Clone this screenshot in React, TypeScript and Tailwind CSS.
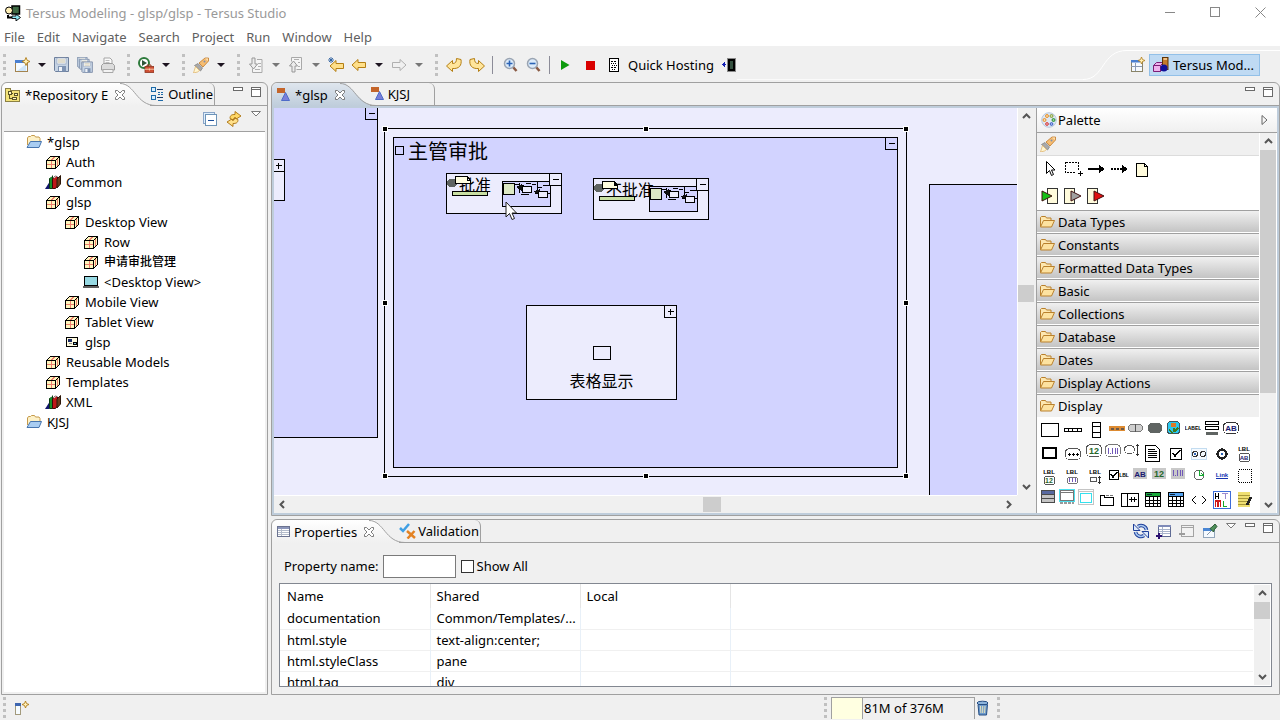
import React from "react";
import type { ReactNode } from "react";

/* ---------- drawing helpers ---------- */

type IconProps = { w?: number; h?: number; smooth?: boolean; children?: ReactNode; className?: string };

function Icon({ w = 16, h = 16, smooth = false, children, className = "" }: IconProps) {
  return (
    <svg
      width={w}
      height={h}
      viewBox={`0 0 ${w} ${h}`}
      fill="none"
      shapeRendering={smooth ? "auto" : "crispEdges"}
      className={`block shrink-0 ${className}`}
      aria-hidden="true"
    >
      {children}
    </svg>
  );
}

type BoxProps = { x: number; y: number; w: number; h: number; f?: string; s?: string; t?: number; r?: number };

function Box({ x, y, w, h, f = "none", s, t = 1, r = 0 }: BoxProps) {
  return s ? (
    <rect x={x + t / 2} y={y + t / 2} width={w - t} height={h - t} fill={f} stroke={s} strokeWidth={t} rx={r} />
  ) : (
    <rect x={x} y={y} width={w} height={h} fill={f} rx={r} />
  );
}

function Tiny({ x, y, size = 7, fill = "#000", children }: { x: number; y: number; size?: number; fill?: string; children: string }) {
  return (
    <text x={x} y={y} fontSize={size} fontWeight="700" fill={fill} textAnchor="middle" fontFamily="Liberation Sans, sans-serif">
      {children}
    </text>
  );
}

/* ---------- toolbar icons ---------- */

const AppIcon = () => (
  <Icon smooth>
    <rect x="7" y="1" width="7.500" height="8" fill="#3f6a45" stroke="#000" strokeWidth="1.500" />
    <circle cx="4" cy="5.500" r="3.500" fill="#fff0b8" stroke="#000" />
    <path d="M3 10v2.500h4" stroke="#000" strokeWidth="2" />
    <path d="M7 11h4V9l4.500 3.500L11 16v-2.500H7z" fill="#8ee6f2" stroke="#000" strokeWidth="0.900" />
  </Icon>
);

const NewIcon = () => (
  <Icon smooth>
    <rect x="1.500" y="3.500" width="12" height="11" fill="#f4faff" stroke="#a3834f" />
    <rect x="1" y="3" width="9" height="3" fill="#4a7fd0" />
    <path d="M3 14l9-7v7z" fill="#cfe6fa" />
    <path d="M12 0.500l1.200 2.800 2.800 1.200-2.800 1.200L12 8.500l-1.200-2.800L8 4.500l2.800-1.200z" fill="#fff1b8" stroke="#b07d1a" strokeWidth="0.900" />
  </Icon>
);

const FastViewIcon = () => (
  <Icon smooth>
    <rect x="1.500" y="3.500" width="5" height="11" fill="#f6fcff" stroke="#a39a7c" />
    <rect x="1" y="3" width="6" height="3" fill="#3e66b0" />
    <path d="M11.500 1l1 2.500 2.500 1-2.500 1-1 2.500-1-2.500-2.500-1 2.500-1z" fill="#fff0b8" stroke="#b07d1a" strokeWidth="0.900" />
  </Icon>
);

const Floppy = ({ x = 0, y = 0, s = 1 }: { x?: number; y?: number; s?: number }) => (
  <g transform={`translate(${x} ${y}) scale(${s})`}>
    <path d="M0.500 0.500h14v14h-13l-1-1z" fill="#c5d3e4" stroke="#6d7f9c" />
    <rect x="3" y="1" width="9" height="6" fill="#f6f9fc" stroke="#8c9bb3" strokeWidth="0.600" />
    <path d="M4 3h7M4 5h7" stroke="#b8a97b" strokeWidth="0.700" />
    <rect x="4" y="9" width="8" height="5.500" fill="#7e93b3" />
    <rect x="5" y="10" width="3" height="4" fill="#eef2f8" />
  </g>
);

const SaveIcon = () => (
  <Icon smooth>
    <Floppy />
  </Icon>
);

const SaveAllIcon = () => (
  <Icon smooth>
    <Floppy s={0.7} />
    <Floppy x={2} y={2} s={0.7} />
    <Floppy x={4.5} y={4.5} s={0.75} />
  </Icon>
);

const PrintIcon = () => (
  <Icon smooth>
    <path d="M4 7V1h6l2 2v4" fill="#fafafa" stroke="#a5a5a5" />
    <path d="M1.500 13V8.500l2-2h9l2 2V13z" fill="#dcdcdc" stroke="#9d9d9d" />
    <path d="M3 12.500h10v3H3z" fill="#f3f3f3" stroke="#a8a8a8" />
    <path d="M5.500 3.500h4M5.500 5.500h4" stroke="#bcbcbc" />
  </Icon>
);

const RunIcon = () => (
  <Icon smooth>
    <circle cx="6" cy="6" r="5" fill="#fff" stroke="#2d7a3b" strokeWidth="2" />
    <path d="M4 3l5 3-5 3z" fill="#2e5537" />
    <path d="M9 9.500V8h4v1.500" stroke="#9c3d22" />
    <rect x="7" y="9.500" width="9" height="6" fill="#cf4f33" stroke="#8d3420" strokeWidth="0.800" />
    <path d="M7 12.200h9M11.500 11.500v2" stroke="#f4c9a8" />
  </Icon>
);

const RocketIcon = () => (
  <Icon smooth>
    <path d="M6 6l6-5h3.500v3L10 10z" fill="#f6bd72" stroke="#c07a2b" strokeWidth="0.800" />
    <path d="M12 1.500h3v2.500z" fill="#fbe1b4" />
    <circle cx="11.500" cy="4.500" r="1" fill="#7e8fae" />
    <path d="M5 6.500l4.500 4.500-2 3-6-5.500z" fill="#a9a9a9" stroke="#858585" strokeWidth="0.800" />
    <path d="M2.500 9.500l4 4-2 1.500-4 1z" fill="#fff6d2" stroke="#dcae60" strokeWidth="0.700" />
  </Icon>
);

const AnnotationDown = () => (
  <Icon smooth>
    <path d="M6.500 3.500V1.500h-2v2h2M9 2.500h5v13H4.500v-4" fill="#f5f5f5" stroke="#a9a9a9" />
    <path d="M4 1h3v6h2.500L5.500 12 1.500 7H4z" fill="#ececec" stroke="#979797" />
    <path d="M7 12.500h5M10 9.500h3M10 6.500h3" stroke="#b0b0b0" />
  </Icon>
);

const AnnotationUp = () => (
  <Icon smooth>
    <path d="M3.500 4.500v-4h10v12h-5" fill="#f5f5f5" stroke="#a9a9a9" />
    <path d="M4 15V9H1.500l4-5 4 5H7v6z" fill="#ececec" stroke="#979797" />
    <path d="M6 2.500h5M10 5.500h2M10 9.500h2" stroke="#b0b0b0" />
  </Icon>
);

const ArrowLeft = ({ gray = false }: { gray?: boolean }) => (
  <path
    d="M1 8l6-5.500v3h7.500v5H7v3z"
    fill={gray ? "#f0f0f0" : "#ffe08a"}
    stroke={gray ? "#b0b0b0" : "#b47f14"}
    strokeLinejoin="round"
  />
);

const LastEditIcon = () => (
  <Icon smooth>
    <g transform="translate(1 1)">
      <ArrowLeft />
    </g>
    <path d="M3 0v6M0 3h6M1 1l4 4M5 1L1 5" stroke="#2b5f9e" strokeWidth="0.900" />
  </Icon>
);

const BackIcon = () => (
  <Icon smooth>
    <ArrowLeft />
  </Icon>
);

const ForwardIcon = () => (
  <Icon smooth>
    <g transform="translate(16 0) scale(-1 1)">
      <ArrowLeft gray />
    </g>
  </Icon>
);

const UndoArrow = () => (
  <path
    d="M0.500 9l6-5.500v3c3 0 4-1.500 4-5l4.500 1c1 6-2 9.500-8.500 9v3z"
    fill="#ffe59b"
    stroke="#b47f14"
    strokeLinejoin="round"
  />
);

const UndoIcon = () => (
  <Icon smooth>
    <UndoArrow />
  </Icon>
);

const RedoIcon = () => (
  <Icon smooth>
    <g transform="translate(16 0) scale(-1 1)">
      <UndoArrow />
    </g>
  </Icon>
);

const ZoomIcon = ({ plus = false }: { plus?: boolean }) => (
  <Icon smooth>
    <path d="M10 10l3.500 4" stroke="#8a5a44" strokeWidth="2.500" />
    <circle cx="6.500" cy="6.500" r="5" fill="#dcebfa" stroke="#9aa4b2" strokeWidth="1.500" />
    <path d={plus ? "M3.500 6.500h6M6.500 3.500v6" : "M3.500 6.500h6"} stroke="#2b63b5" strokeWidth="1.600" />
  </Icon>
);

const PlayIcon = () => (
  <Icon smooth>
    <path d="M1 3l8.500 5L1 13z" fill="#0c9a0c" />
  </Icon>
);

const StopIcon = () => (
  <Icon>
    <Box x={3} y={4} w={9} h={9} f="#d90000" />
  </Icon>
);

const ServerIcon = () => (
  <Icon>
    <Box x={3} y={1} w={10} h={14} f="#fff" s="#000" />
    <path d="M5 4.500h6M5 10.500h6" stroke="#000" strokeDasharray="2 1" />
    <path d="M5 6.500h6M6 8.500h5M6 12.500h4" stroke="#000" strokeDasharray="1 1" />
  </Icon>
);

const DeviceIcon = () => (
  <Icon>
    <path d="M2 7.500h3" stroke="#1420b4" />
    <path d="M1 7.500l3-3v6z" fill="#1420b4" />
    <Box x={6} y={1} w={9} h={14} f="#8a8a8a" />
    <Box x={7} y={2} w={7} h={12} f="#34503f" s="#000" t={2} />
  </Icon>
);

const OpenPerspectiveIcon = () => (
  <Icon smooth>
    <rect x="1.500" y="3.500" width="11" height="11" fill="#f6fafe" stroke="#8a8468" />
    <rect x="1" y="3" width="9" height="2.500" fill="#4a7fd0" />
    <path d="M5.500 6v8M1 9.500h11" stroke="#8a9ab5" />
    <path d="M11.500 0l1 2.500 2.500 1-2.500 1-1 2.500-1-2.500-2.500-1 2.500-1z" fill="#fff0b8" stroke="#b07d1a" strokeWidth="0.800" />
  </Icon>
);

const TersusIcon = () => (
  <Icon smooth>
    <path d="M0.500 8.500l3-3h7v6l-3 3h-7z" fill="#eeb2ec" stroke="#7b1f76" />
    <path d="M0.500 8.500h7v6M7.500 8.500l3-3" stroke="#7b1f76" />
    <rect x="9.500" y="0.500" width="5.500" height="12" fill="#c47a2c" stroke="#5e3407" />
    <rect x="10.500" y="1" width="3.500" height="2" fill="#f0c187" />
    <circle cx="11" cy="11" r="3.500" fill="#10109a" />
  </Icon>
);

/* ---------- view icons ---------- */

const RepositoryIcon = () => (
  <Icon>
    <path d="M0.500 1.500h5v2h9v11h-14z" fill="#f3e37a" stroke="#8c8144" />
    <path d="M4.500 5v7M4.500 6.500h3M4.500 11.500h3" stroke="#5a5326" />
    <Box x={3} y={4} w={4} h={4} f="#fff8c4" s="#5a5326" />
    <Box x={9} y={6} w={4} h={3} f="#fff8c4" s="#5a5326" />
    <Box x={7} y={10} w={5} h={3} f="#fff8c4" s="#5a5326" />
  </Icon>
);

const OutlineIcon = () => (
  <Icon>
    <Box x={1} y={1} w={5} h={5} f="#d7efff" s="#1d6aa8" />
    <Box x={1} y={9} w={5} h={5} f="#d7efff" s="#1d6aa8" />
    <path d="M7 3.500h6M7 11.500h6" stroke="#1b3b66" />
    <path d="M8 6.500h2M11 6.500h2M8 8.500h2M11 8.500h2M8 14.500h5" stroke="#1d6aa8" />
  </Icon>
);

const ModelTabIcon = () => (
  <Icon smooth>
    <rect x="1" y="1" width="8" height="5" fill="#c4652a" />
    <path d="M9.500 5.500l4 8H5.500z" fill="#7a7fd8" stroke="#4e6bc8" />
  </Icon>
);

const CloseGlyph = () => (
  <Icon w={12} h={12} smooth>
    <path
      d="M1.500 1.500h2L6 4l2.500-2.500h2v2L8 6l2.500 2.500v2h-2L6 8l-2.500 2.500h-2v-2L4 6 1.500 3.500z"
      fill="#fff"
      stroke="#6e6e6e"
      strokeWidth="0.900"
    />
  </Icon>
);

const MinGlyph = () => (
  <Icon w={10} h={4}>
    <Box x={0} y={0} w={10} h={4} f="#fff" s="#6a6a6a" />
  </Icon>
);

const MaxGlyph = () => (
  <Icon w={10} h={10}>
    <Box x={0} y={0} w={10} h={10} f="#fff" s="#6a6a6a" />
    <Box x={0} y={2} w={10} h={1} f="#6a6a6a" />
  </Icon>
);

const MenuGlyph = () => (
  <Icon w={10} h={6} smooth>
    <path d="M0.500 0.500h9L5 5z" fill="#fff" stroke="#7b7b7b" />
  </Icon>
);

const CollapseAllIcon = () => (
  <Icon>
    <Box x={0} y={1} w={12} h={12} f="#dfeefb" s="#8aa5c8" />
    <Box x={2} y={3} w={12} h={12} f="#fff" s="#6e94b8" />
    <Box x={5} y={9} w={6} h={1} f="#1c4f9c" />
  </Icon>
);

const LinkIcon = () => (
  <Icon smooth>
    <path d="M4 7.500C4 4 6 3.500 9 3.500V0.500l6 4.500-4 2.500H9.500V6.500C8 6.500 7.500 7.500 7.500 9z" fill="#ffd867" stroke="#a9700f" strokeWidth="0.900" />
    <path d="M12 8.500c0 3.500-2 4-5 4v3l-6-4.500 4-2.500h1.500v1c1.500 0 2-1 2-2.500z" fill="#ffe08a" stroke="#a9700f" strokeWidth="0.900" />
  </Icon>
);

const TableViewIcon = () => (
  <Icon>
    <Box x={1} y={2} w={13} h={11} f="#fff" s="#6b7390" />
    <Box x={2} y={3} w={11} h={2} f="#8d97bb" />
    <path d="M2 6.500h11M2 8.500h11M2 10.500h11M5.500 5v7" stroke="#b4bccb" />
  </Icon>
);

const ValidationIcon = () => (
  <Icon w={17} smooth>
    <path d="M1 5l3 3 6-7" stroke="#3f9fe4" strokeWidth="2.500" />
    <path d="M8 8l8 7M15.500 8l-7 7.500" stroke="#e38222" strokeWidth="2.500" />
  </Icon>
);

const RefreshIcon = () => (
  <Icon smooth>
    <path d="M5 3.500A5.500 5.500 0 0 1 13.500 7M11 12.500A5.500 5.500 0 0 1 2.500 9" stroke="#1f3f9a" strokeWidth="3.600" />
    <path d="M5 3.500A5.500 5.500 0 0 1 13.500 7M11 12.500A5.500 5.500 0 0 1 2.500 9" stroke="#a8c8f0" strokeWidth="1.600" />
    <path d="M0.500 1v6.500H7z" fill="#dce9fb" stroke="#1f3f9a" />
    <path d="M15.500 15V8.500H9z" fill="#dce9fb" stroke="#1f3f9a" />
  </Icon>
);

const AddRowIcon = () => (
  <Icon>
    <Box x={2} y={2} w={13} h={12} f="#fff" s="#5f6b94" />
    <Box x={2} y={2} w={13} h={2} f="#7f8bb8" />
    <path d="M3 6.500h11M3 8.500h11M3 10.500h11M6.500 4v9" stroke="#a9b4cc" />
    <path d="M3 10v6M0 13h6" stroke="#2b1070" strokeWidth="2" />
  </Icon>
);

const RemoveRowIcon = () => (
  <Icon>
    <Box x={2} y={2} w={13} h={12} f="#f2f2f2" s="#a3a3a3" />
    <Box x={2} y={4} w={13} h={1} f="#a3a3a3" />
    <Box x={0} y={10} w={6} h={2} f="#9c9c9c" />
  </Icon>
);

const PinIcon = () => (
  <Icon smooth>
    <rect x="1.500" y="5.500" width="11" height="9" fill="#f5faff" stroke="#93a6bb" />
    <rect x="1" y="5" width="9" height="3" fill="#4a86d4" />
    <path d="M5 12l4-4" stroke="#8a96a5" />
    <path d="M8 5.500l3.500 3.500 1-2.500 2.500-3-2-2.500-3 3z" fill="#4f8f5a" stroke="#24522e" strokeWidth="0.900" />
  </Icon>
);

const TrashIcon = () => (
  <Icon smooth>
    <ellipse cx="7.500" cy="3" rx="5.500" ry="1.800" fill="#8db4dc" stroke="#264f85" />
    <path d="M3 4.500h9.500l-1 10.500H4z" fill="#6d9acb" stroke="#264f85" />
    <path d="M5.500 6l0.400 7M7.700 6v7M10 6l-0.400 7" stroke="#e9e4bd" />
  </Icon>
);

/* ---------- tree icons ---------- */

const FolderBlue = () => (
  <Icon smooth>
    <path d="M1.500 11V4l1-1.500h2l1-1h3l1 1.500h3.500l1 1.500V7" fill="#fdf1c8" stroke="#c59a4a" />
    <path d="M1 13.500L4.500 7.500h11l-2.500 6z" fill="#a9cdf2" stroke="#4775ae" />
  </Icon>
);

const PackageIcon = () => (
  <Icon>
    <path d="M1.500 6.500h9v8h-9z" fill="#fff6bd" stroke="#000" />
    <path d="M1.500 6.500l4-4h9l-4 4zM10.500 6.500l4-4v8l-4 4z" fill="#fff6bd" stroke="#000" />
    <path d="M6.500 7v7M6.500 6l3-3M2 10.500h8M12.500 5v7" stroke="#f08070" />
  </Icon>
);

const BooksIcon = () => (
  <Icon smooth>
    <path d="M0 15l4.500-7v7z" fill="#141470" />
    <path d="M4.500 14.500V4.500l3-3v13z" fill="#17902a" stroke="#083d10" />
    <path d="M7.500 14.500V5l3-3 2 1v9l-2 2.500z" fill="#c01818" stroke="#3c0808" />
    <path d="M12 14V5l3.500-3.500V10z" fill="#6c3a1a" stroke="#2c1608" />
    <path d="M5.500 3.500l2-2M9 4l3-2.500" stroke="#ddd" />
  </Icon>
);

const LaptopIcon = () => (
  <Icon>
    <Box x={1} y={2} w={14} h={10} f="#97d9e3" s="#000" />
    <Box x={0} y={12} w={16} h={2} f="#5f5f5f" />
  </Icon>
);

const SystemIcon = () => (
  <Icon>
    <Box x={2} y={3} w={12} h={10} f="#fffbe0" s="#000" />
    <Box x={4} y={5} w={4} h={3} f="#1a2a66" />
    <Box x={9} y={8} w={4} h={3} f="#8bc0df" s="#000" />
    <Box x={5} y={9} w={3} h={1} f="#888" />
  </Icon>
);

/* ---------- palette icons ---------- */

const FolderYellow = () => (
  <Icon smooth>
    <path d="M1.500 12.500V3.500l1-1h4l1 1.500h4.500v2.500" fill="#fde7b0" stroke="#b9802c" />
    <path d="M1.500 13L4.500 6.500h11l-3 6.500z" fill="#fde2a0" stroke="#b9802c" />
  </Icon>
);

const PaletteIcon = () => (
  <Icon smooth>
    <circle cx="8" cy="8" r="7.300" fill="#dfe9f5" stroke="#b7c8dd" />
    <circle cx="6" cy="4" r="1.500" fill="#fbd8a4" stroke="#e38a20" strokeWidth="0.900" />
    <circle cx="10.500" cy="4" r="1.500" fill="#cdd9a0" stroke="#7c962e" strokeWidth="0.900" />
    <circle cx="3.500" cy="8" r="1.500" fill="#fbd8a4" stroke="#e38a20" strokeWidth="0.900" />
    <circle cx="12.500" cy="8" r="1.500" fill="#8fd08f" stroke="#1f8a2a" strokeWidth="0.900" />
    <circle cx="6" cy="12" r="1.400" fill="#f4b0b0" stroke="#cf3333" strokeWidth="0.900" />
    <circle cx="10.500" cy="12" r="1.400" fill="#a8b8ec" stroke="#3256c0" strokeWidth="0.900" />
  </Icon>
);

const PointerTool = () => (
  <Icon w={20} h={20} smooth>
    <path d="M6.500 2.500v12l3-3 2 5 2-1-2-4.500h3.500z" fill="#fff" stroke="#000" />
  </Icon>
);

const MarqueeTool = () => (
  <Icon w={20} h={20}>
    <rect x="2.500" y="3.500" width="13" height="10" stroke="#000" strokeDasharray="2 1" />
    <Box x={13} y={11} w={7} h={7} f="#fff" />
    <path d="M15 14.500h5M17.500 12v5" stroke="#000" />
  </Icon>
);

const FlowTool = ({ dashed = false }: { dashed?: boolean }) => (
  <Icon w={20} h={20}>
    <path d="M2 10h12" stroke="#000" strokeWidth="2" strokeDasharray={dashed ? "2 1" : undefined} />
    <path d="M13 5.500l5.500 4.500-5.500 4.500z" fill="#000" />
  </Icon>
);

const NoteTool = () => (
  <Icon w={20} h={20}>
    <path d="M4.500 4.500h8l3 3v10h-11zM12.500 4.500v3h3" fill="#fffbdc" stroke="#000" />
  </Icon>
);

const SlotTool = ({ color, first = false }: { color: string; first?: boolean }) => (
  <Icon w={20} h={20} smooth>
    <rect x={first ? 7.5 : 1.5} y="2.500" width="10" height="15" fill="#fffbdc" stroke="#333" />
    <path d={first ? "M2 5l10 5-10 5z" : "M8 5l10 5-10 5z"} fill={color} stroke="#401010" />
  </Icon>
);

const DateBars = ({ x, y, h }: { x: number; y: number; h: number }) => (
  <path
    d={`M${x} ${y}v${h}M${x + 4} ${y}v${h}M${x + 7} ${y}v${h}M${x + 9} ${y}v${h}M${x + 2} ${y + h - 1}v1`}
    stroke="#7058b8"
  />
);

const TableArt = ({ bar }: { bar: string }) => (
  <>
    <Box x={2} y={3} w={16} h={15} f="#fff" s="#000" />
    <Box x={3} y={4} w={14} h={3} f={bar} />
    <path d="M4 5.500h5" stroke="#123" />
    <path d="M2 7.500h16M2 11.500h16M2 14.500h16M6.500 8v10M10.500 8v10M14.500 8v10" stroke="#000" />
  </>
);

const paletteRows: { wide: boolean; name: string; art: ReactNode }[][] = [
  [
    { wide: true, name: "Pane", art: <Box x={1} y={3} w={18} h={14} f="#fff" s="#000" /> },
    { wide: true, name: "Row", art: <><Box x={1} y={8} w={18} h={4} f="#fff" s="#000" /><path d="M5.500 8v4M9.500 8v4M14.500 8v4" stroke="#000" /></> },
    { wide: true, name: "Column", art: <><Box x={6} y={2} w={9} h={16} f="#fff" s="#000" /><path d="M6 6.500h9M6 12.500h9" stroke="#000" /></> },
    { wide: false, name: "Toolbar", art: <><Box x={0} y={6} w={16} h={5} f="#dd8b32" /><path d="M2 8.500h3M7 8.500h3M12 8.500h3" stroke="#6c5a4a" strokeWidth="2" /></> },
    { wide: false, name: "Toggle", art: <><Box x={0} y={4} w={15} h={8} f="#cfcfcf" s="#777" r={4} /><path d="M7.500 4v8" stroke="#555" /></> },
    { wide: false, name: "Button", art: <Box x={1} y={3} w={14} h={10} f="#5f6462" r={4} /> },
    { wide: false, name: "Image", art: <><Box x={1} y={1} w={13} h={13} f="#28c8f0" s="#40535a" r={3} /><circle cx="7.500" cy="5" r="2.500" fill="#dd7a28" /><path d="M8 8v4M3 10l4 3M12 8l-4 4" stroke="#3f7a20" strokeWidth="1.500" /></> },
    { wide: false, name: "Label", art: <Tiny x={8} y={10} size={5}>LABEL</Tiny> },
    { wide: false, name: "List", art: <><Box x={1} y={1} w={14} h={4} f="#fff" s="#000" /><Box x={1} y={6} w={14} h={4} f="#fff" s="#000" /><Box x={2} y={12} w={12} h={3} f="#5f6462" /></> },
    { wide: false, name: "Text input", art: <><Box x={0} y={2} w={16} h={12} f="#fff" s="#333" r={4} /><Tiny x={8} y={11} size={8} fill="#1a1a70">AB</Tiny></> },
  ],
  [
    { wide: true, name: "Popup", art: <Box x={2} y={4} w={15} h={12} f="#fff" s="#000" t={2} /> },
    { wide: true, name: "Password", art: <><Box x={2} y={5} w={16} h={12} f="#fff" s="#555" r={4} /><path d="M4.500 11h3M8.500 11h3M12.500 11h3M6 9.500v3M10 9.500v3M14 9.500v3" stroke="#000" /></> },
    { wide: false, name: "Number input", art: <><Box x={0} y={1} w={16} h={13} f="#fff" s="#555" r={4} /><Tiny x={8} y={11} size={9} fill="#27682b">12</Tiny></> },
    { wide: false, name: "Date input", art: <><Box x={0} y={1} w={16} h={13} f="#fff" s="#777" r={4} /><DateBars x={3.5} y={5} h={6} /></> },
    { wide: false, name: "Chooser", art: <><Box x={0} y={2} w={11} h={9} f="#fff" s="#555" r={4} /><path d="M13.500 1v12M12 2.500h3M12 11.500h3" stroke="#333" /></> },
    { wide: true, name: "Text area", art: <><path d="M2.500 2.500h10l4 4v12h-14z" fill="#fff" stroke="#000" /><path d="M5 6.500h7M5 8.500h9M5 10.500h9M5 12.500h9M5 14.500h9" stroke="#000" /></> },
    { wide: true, name: "Check box", art: <><Box x={4} y={5} w={12} h={12} f="#fff" s="#000" /><path d="M7 10l2 3 5-6" stroke="#000" strokeWidth="1.500" /></> },
    { wide: true, name: "Radio group", art: <><Box x={2} y={5} w={16} h={12} f="#f4faff" s="#c3dcf0" /><circle cx="6" cy="11" r="2.500" stroke="#333" /><circle cx="6" cy="11" r="1" fill="#2b63b5" /><circle cx="14" cy="11" r="2.500" stroke="#333" /></> },
    { wide: true, name: "Radio button", art: <><circle cx="10" cy="11" r="4.500" stroke="#222" strokeWidth="2.500" fill="#fff" /><circle cx="10" cy="11" r="1.500" fill="#2b63b5" /></> },
    { wide: true, name: "Labeled text", art: <><Tiny x={9} y={8} size={6}>LBL</Tiny><Box x={4} y={10} w={11} h={9} f="#fff" s="#555" r={2} /><Tiny x={9} y={17} size={6} fill="#1a1a70">AB</Tiny></> },
  ],
  [
    { wide: true, name: "Labeled number", art: <><Tiny x={9} y={8} size={6}>LBL</Tiny><Box x={4} y={10} w={11} h={9} f="#fff" s="#555" r={2} /><Tiny x={9} y={17} size={7} fill="#27682b">12</Tiny></> },
    { wide: true, name: "Labeled date", art: <><Tiny x={9} y={8} size={6}>LBL</Tiny><Box x={4} y={11} w={11} h={7} f="#fff" s="#777" r={2} /><path d="M6.500 12v4M9.500 12v4M12.500 12v4" stroke="#7058b8" /></> },
    { wide: true, name: "Labeled chooser", art: <><Tiny x={9} y={8} size={6}>LBL</Tiny><Box x={4} y={11} w={7} h={5} f="#fff" s="#555" r={1} /><path d="M13.500 10v8M12 11.500h3M12 16.500h3" stroke="#333" /></> },
    { wide: true, name: "Labeled check box", art: <><Box x={0} y={4} w={10} h={10} f="#fff" s="#000" /><path d="M2 8l2 3 4-5" stroke="#000" strokeWidth="1.500" /><Tiny x={15} y={11} size={5}>LBL</Tiny></> },
    { wide: false, name: "Text display", art: <><Box x={1} y={2} w={14} h={11} f="#c9c9c9" /><Tiny x={8} y={11} size={8} fill="#1a1a70">AB</Tiny></> },
    { wide: false, name: "Number display", art: <><Box x={1} y={2} w={14} h={11} f="#c9c9c9" /><Tiny x={8} y={11} size={9} fill="#27682b">12</Tiny></> },
    { wide: false, name: "Date display", art: <><Box x={1} y={2} w={14} h={11} f="#c9c9c9" /><DateBars x={3.5} y={4} h={6} /></> },
    { wide: true, name: "Timer", art: <><circle cx="10" cy="9" r="5" fill="#fff" stroke="#666" /><path d="M10 4v5.500h5M12 7l3 2.500" stroke="#16a832" /></> },
    { wide: true, name: "Link", art: <><Tiny x={10} y={11} size={6} fill="#1432b0">Link</Tiny><path d="M4 12.500h12" stroke="#1432b0" /></> },
    { wide: true, name: "Embedded", art: <rect x="3.500" y="3.500" width="13" height="13" stroke="#000" strokeDasharray="1 1" /> },
  ],
  [
    { wide: false, name: "Stack", art: <><Box x={1} y={1} w={14} h={13} f="#c4c4c4" s="#4a4a4a" r={1} /><Box x={2} y={2} w={12} h={3} f="#5869a0" /><path d="M1 5.500h14M1 9.500h14" stroke="#4a4a4a" /></> },
    { wide: false, name: "Window", art: <><Box x={0} y={0} w={16} h={13} f="#4fe0ee" /><Box x={1} y={1} w={14} h={11} f="#fff" s="#777" /><path d="M1 3.500h14" stroke="#777" /><path d="M1 14h14" stroke="#999" strokeWidth="2" strokeDasharray="3 1" /></> },
    { wide: false, name: "Dialog", art: <><Box x={0} y={0} w={16} h={16} f="#fff" s="#c4c4c4" /><path d="M0 2.500h16" stroke="#c4c4c4" /><Box x={2} y={4} w={12} h={10} f="#fff" s="#35e0ee" r={1} /></> },
    { wide: true, name: "Tabs", art: <><path d="M3.500 6.500h4v2h9v8h-13z" fill="#fff" stroke="#000" /><path d="M9 6.500h3M13 6.500h3" stroke="#777" /></> },
    { wide: true, name: "Splitter", art: <><Box x={1} y={4} w={18} h={14} f="#fff" s="#000" /><path d="M7.500 4v14M9 10.500h8M11.500 8v5M14.500 8v5" stroke="#000" /></> },
    { wide: true, name: "Table", art: <TableArt bar="#19a83a" /> },
    { wide: true, name: "Simple table", art: <TableArt bar="#52a2f0" /> },
    { wide: true, name: "Tag", art: <path d="M7 7l-4 4 4 4M13 7l4 4-4 4" stroke="#000" /> },
    { wide: true, name: "HTML", art: <><Box x={1} y={2} w={18} h={18} f="#fff" s="#3c6cd8" /><path d="M3.500 4v6M6.500 4v6M3.500 7.500h3" stroke="#000" /><path d="M10 4.500h6M13.500 4v6" stroke="#9a8ad0" /><path d="M3.500 18v-6h5v6M6 12v6" stroke="#d01818" strokeWidth="1.500" /><path d="M11.500 12v6M11 17.500h4" stroke="#18a828" /></> },
    { wide: true, name: "Notes", art: <><Box x={3} y={3} w={12} h={15} f="#efdf72" /><path d="M3 6.500h12M3 9.500h12M3 12.500h12M3 15.500h12" stroke="#a8983a" /><path d="M16 8l-4 8" stroke="#222" strokeWidth="2.500" /></> },
  ],
];

/* ---------- small UI parts ---------- */

function Handle() {
  return <div className="ml-1 h-[22px] w-1 shrink-0 border-l-[3px] border-dotted border-[#c0c0c0] first:ml-0" />;
}

function ToolButton({ label, children }: { label: string; children: ReactNode }) {
  return (
    <button type="button" aria-label={label} className="flex h-6 shrink-0 items-center justify-center">
      {children}
    </button>
  );
}

function DropArrow({ label, gray = false }: { label: string; gray?: boolean }) {
  return (
    <button type="button" aria-label={label} className="flex h-6 w-[10px] shrink-0 items-center justify-center">
      <Icon w={8} h={4} smooth>
        <path d="M0 0h8L4 4z" fill={gray ? "#777" : "#1d1420"} />
      </Icon>
    </button>
  );
}

function Separator() {
  return <div className="h-[18px] w-1 shrink-0 border-l border-[#8c8c98]" />;
}

function Chevron({ dir }: { dir: "up" | "down" | "left" | "right" }) {
  const paths = { up: "M1 6l3.500-3.500L8 6", down: "M1 3l3.500 3.500L8 3", left: "M6 1L2.500 4.500 6 8", right: "M3 1l3.500 3.500L3 8" };
  return (
    <Icon w={9} h={9} smooth>
      <path d={paths[dir]} stroke="#555" strokeWidth="2" />
    </Icon>
  );
}

function TabSlope({ from, to }: { from: string; to: string }) {
  const id = `slope-${from.slice(1)}`;
  return (
    <svg width="40" height="23" viewBox="0 0 40 23" className="-mr-[10px] -ml-[6px] block shrink-0" fill="none" aria-hidden="true">
      <defs>
        <linearGradient id={id} x1="0" y1="0" x2="0" y2="1">
          <stop offset="0" stopColor={from} />
          <stop offset="1" stopColor={to} />
        </linearGradient>
      </defs>
      <path d="M0 0C15 0 16 22 38 23H0z" fill={`url(#${id})`} />
      <path d="M0 0.500C15 0.500 16 22.500 36 22.500h4" stroke="#a0a0a0" />
    </svg>
  );
}

function CloseTab() {
  return (
    <button type="button" aria-label="Close" className="relative z-10 ml-[6px]">
      <CloseGlyph />
    </button>
  );
}

/* ---------- tree ---------- */

const treeItems = [
  { pad: "pl-[23px]", icon: <FolderBlue />, text: "*glsp" },
  { pad: "pl-[42px]", icon: <PackageIcon />, text: "Auth" },
  { pad: "pl-[42px]", icon: <BooksIcon />, text: "Common" },
  { pad: "pl-[42px]", icon: <PackageIcon />, text: "glsp" },
  { pad: "pl-[61px]", icon: <PackageIcon />, text: "Desktop View" },
  { pad: "pl-[80px]", icon: <PackageIcon />, text: "Row" },
  { pad: "pl-[80px]", icon: <PackageIcon />, text: "申请审批管理", cjk: true },
  { pad: "pl-[80px]", icon: <LaptopIcon />, text: "<Desktop View>" },
  { pad: "pl-[61px]", icon: <PackageIcon />, text: "Mobile View" },
  { pad: "pl-[61px]", icon: <PackageIcon />, text: "Tablet View" },
  { pad: "pl-[61px]", icon: <SystemIcon />, text: "glsp" },
  { pad: "pl-[42px]", icon: <PackageIcon />, text: "Reusable Models" },
  { pad: "pl-[42px]", icon: <PackageIcon />, text: "Templates" },
  { pad: "pl-[42px]", icon: <BooksIcon />, text: "XML" },
  { pad: "pl-[23px]", icon: <FolderBlue />, text: "KJSJ" },
];

function RepositoryView() {
  return (
    <section className="ml-px flex w-[267px] shrink-0 flex-col rounded-t-md border border-[#a0a0a0]">
      <div className="flex h-[23px] shrink-0">
        <div className="flex items-center rounded-tl-md bg-linear-to-b from-white to-[#f0f0f0] pl-[3px]">
          <RepositoryIcon />
          <button type="button" className="ml-1 whitespace-nowrap">*Repository E</button>
          <CloseTab />
        </div>
        <TabSlope from="#ffffff" to="#f0f0f0" />
        <div className="flex items-center rounded-tr-md border-r border-b border-[#a0a0a0] pr-px">
          <OutlineIcon />
          <button type="button" className="ml-[2px]">Outline</button>
        </div>
        <div className="flex flex-1 items-start justify-end gap-2 border-b border-[#a0a0a0] pt-1 pr-[6px]">
          <button type="button" aria-label="Minimize"><MinGlyph /></button>
          <button type="button" aria-label="Maximize"><MaxGlyph /></button>
        </div>
      </div>
      <div className="mx-[2px] flex h-[26px] shrink-0 items-start justify-end gap-[7px] border-b border-[#a0a0a0] pt-[5px] pr-1">
        <button type="button" aria-label="Collapse all"><CollapseAllIcon /></button>
        <button type="button" aria-label="Link with editor"><LinkIcon /></button>
        <button type="button" aria-label="View menu" className="ml-[2px]"><MenuGlyph /></button>
      </div>
      <ul className="flex-1 border-x-2 border-b-2 border-[#f0f0f0] bg-white">
        {treeItems.map((item, i) => (
          <li key={i} className={`-ml-px flex h-5 items-center ${item.pad}`}>
            {item.icon}
            <span className={item.cjk ? "ml-[5px] text-xs font-medium" : "ml-[5px]"}>{item.text}</span>
          </li>
        ))}
      </ul>
    </section>
  );
}

/* ---------- diagram ---------- */

function Toggle({ open, className }: { open: boolean; className: string }) {
  return (
    <div className={`absolute size-[13px] border border-black ${className}`}>
      <Icon w={11} h={11}>
        <path d={open ? "M3 5.500h6" : "M3 5.500h6M5.500 3v6"} stroke="#000" />
      </Icon>
    </div>
  );
}

function MiniFlow({ label }: { label: string }) {
  return (
    <>
      <span className="absolute top-0 left-[12px] text-base leading-5">{label}</span>
      <div className="absolute top-[1px] left-0">
        <Icon w={42} h={22}>
          <ellipse cx="5" cy="8" rx="5" ry="4.500" fill="#5f6462" />
          <path d="M8.500 1.500h12l3 4v3h-15zM20.500 1.500v4h3" fill="#fffde0" stroke="#000" />
          <Box x={5} y={16} w={36} h={5} f="#c9dfa3" s="#000" />
        </Icon>
      </div>
      <div className="absolute top-[1px] left-[55px]">
        <Icon w={50} h={34}>
          <Box x={0} y={6} w={49} h={26} f="#d2d3ff" s="#000" />
          <Box x={1} y={8} w={12} h={12} f="#dce8c4" s="#000" />
          <path d="M13 9.500h5M17.500 8v10M19 19.500h8M24 8.500h5M22 10.500h-3M30 9.500h4M35.500 6v11M36 12.500h4M41 10.500h6M33 18.500h15" stroke="#000" />
          <path d="M14 12l6-3v7zM31 17l7-3v5z" fill="#111" />
          <Box x={20} y={11} w={10} h={7} f="#ececfd" s="#000" />
          <Box x={36} y={16} w={10} h={7} f="#ececfd" s="#000" />
        </Icon>
      </div>
    </>
  );
}

const handlePositions = [
  "-left-[3px] -top-[3px]",
  "left-1/2 -top-[3px] -ml-[3px]",
  "-right-[3px] -top-[3px]",
  "-left-[3px] top-1/2 -mt-[3px]",
  "-right-[3px] top-1/2 -mt-[3px]",
  "-left-[3px] -bottom-[3px]",
  "left-1/2 -bottom-[3px] -ml-[3px]",
  "-right-[3px] -bottom-[3px]",
];

function Diagram() {
  return (
    <div className="relative min-w-0 flex-1 overflow-hidden bg-[#ececfd] [font-family:'Noto_Sans_CJK_SC',sans-serif]">
      <div className="absolute top-[-40px] left-[-20px] h-[370px] w-[124px] border border-black bg-[#d2d3ff]" />
      <Toggle open className="top-[-1px] left-[91px]" />
      <div className="absolute top-[51px] left-[-40px] h-[42px] w-[51px] border border-black bg-[#ececfd]" />
      <Toggle open={false} className="top-[51px] left-[-2px]" />
      <div className="absolute top-[76px] left-[655px] h-[480px] w-[400px] border border-black bg-[#d2d3ff]" />

      <div className="absolute top-[20px] left-[110px] h-[349px] w-[523px] border border-black">
        {handlePositions.map((pos) => (
          <span key={pos} className={`absolute size-[6px] border border-white bg-black ${pos}`} />
        ))}
      </div>
      <div className="absolute top-[29px] left-[119px] h-[331px] w-[505px] border border-black bg-[#d2d3ff]">
        <Toggle open className="-top-px -right-px" />
        <span className="absolute top-[8px] left-px size-[9px] border border-black" />
        <span className="absolute -top-px left-[14px] text-xl leading-7 whitespace-nowrap">主管审批</span>

        <div className="absolute top-[35px] left-[52px] h-[41px] w-[116px] border border-black bg-[#ececfd]">
          <MiniFlow label="批准" />
          <Toggle open className="-top-px -right-px bg-[#ececfd]" />
        </div>
        <div className="absolute top-[40px] left-[199px] h-[42px] w-[116px] border border-black bg-[#ececfd]">
          <MiniFlow label="不批准" />
          <Toggle open className="-top-px -right-px bg-[#ececfd]" />
        </div>
        <div className="absolute top-[167px] left-[132px] flex h-[95px] w-[151px] flex-col items-center border border-black bg-[#ececfd] pt-[40px]">
          <Toggle open={false} className="-top-px -right-px" />
          <span className="h-[14px] w-[18px] border border-black" />
          <span className="mt-2 text-base leading-6">表格显示</span>
        </div>
        <Icon w={12} h={20} smooth className="absolute top-[63px] left-[111px]">
          <path d="M1 1v15l3.500-3.500L7 18.500l2.500-1L7 12h4.500z" fill="#fff" stroke="#222" />
        </Icon>
      </div>
    </div>
  );
}

/* ---------- palette ---------- */

const drawers = [
  "Data Types",
  "Constants",
  "Formatted Data Types",
  "Basic",
  "Collections",
  "Database",
  "Dates",
  "Display Actions",
];

function Palette() {
  return (
    <aside className="ml-[2px] flex w-[241px] shrink-0 flex-col border-l border-[#a0a0a0] bg-white">
      <header className="flex h-[25px] shrink-0 items-center border-b border-[#a0a0a0] bg-linear-to-b from-white to-[#f0f0f0] pr-[9px] pl-1">
        <PaletteIcon />
        <span className="ml-px">Palette</span>
        <button type="button" aria-label="Hide palette" className="ml-auto">
          <Icon w={7} h={12} smooth>
            <path d="M1 1.500v9L6 6z" stroke="#666" />
          </Icon>
        </button>
      </header>
      <div className="flex min-h-0 flex-1">
        <div className="min-w-0 flex-1 overflow-hidden">
          <div className="flex h-[23px] items-center border-b border-[#dcdcdc] bg-[#f0f0f0] pl-[3px]">
            <RocketIcon />
          </div>
          <div className="grid h-[54px] grid-cols-[repeat(5,23px)] place-items-center pb-px pl-px">
            <button type="button" aria-label="Select"><PointerTool /></button>
            <button type="button" aria-label="Marquee"><MarqueeTool /></button>
            <button type="button" aria-label="Flow"><FlowTool /></button>
            <button type="button" aria-label="Link"><FlowTool dashed /></button>
            <button type="button" aria-label="Note"><NoteTool /></button>
            <button type="button" aria-label="Input slot"><SlotTool first color="#16c016" /></button>
            <button type="button" aria-label="Exit slot"><SlotTool color="#a0a0a0" /></button>
            <button type="button" aria-label="Error slot"><SlotTool color="#e01010" /></button>
          </div>
          {drawers.map((d) => (
            <button
              key={d}
              type="button"
              className="flex h-[23px] w-full items-center border-t border-b border-t-[#a0a0a0] border-b-white bg-linear-to-b from-[#f0f0f0] to-[#c4c4c4] pl-[2px]"
            >
              <FolderYellow />
              <span className="ml-[3px]">{d}</span>
            </button>
          ))}
          <button type="button" className="flex h-[23px] w-full items-center border-t border-[#a0a0a0] bg-[#f0f0f0] pl-[2px]">
            <FolderYellow />
            <span className="ml-[3px]">Display</span>
          </button>
          <div className="pt-[3px] pl-px">
            {paletteRows.map((row, i) => (
              <div key={i} className="flex h-[23px] items-start">
                {row.map((it) => (
                  <button
                    key={it.name}
                    type="button"
                    aria-label={it.name}
                    className={it.wide ? "flex w-[23px] shrink-0 justify-center" : "flex w-[19px] shrink-0 justify-center"}
                  >
                    <Icon w={it.wide ? 20 : 16} h={it.wide ? 20 : 16}>{it.art}</Icon>
                  </button>
                ))}
              </div>
            ))}
          </div>
        </div>
        <div className="mr-px ml-px flex w-4 shrink-0 flex-col items-center bg-[#f0f0f0]">
          <div className="flex h-[17px] items-center"><Chevron dir="up" /></div>
          <div className="h-[243px] w-full bg-[#cdcdcd]" />
          <div className="mt-auto flex h-[17px] items-center"><Chevron dir="down" /></div>
        </div>
      </div>
    </aside>
  );
}

function EditorArea() {
  return (
    <section className="flex min-h-0 flex-1 flex-col rounded-t-md border border-[#a0a0a0]">
      <div className="flex h-[23px] shrink-0">
        <div className="flex items-center rounded-tl-md bg-linear-to-b from-[#dfe6ee] to-[#bfcddb] pl-1">
          <ModelTabIcon />
          <button type="button" className="ml-[3px]">*glsp</button>
          <CloseTab />
        </div>
        <TabSlope from="#dfe6ee" to="#bfcddb" />
        <div className="flex items-center rounded-tr-md border-r border-b border-[#a0a0a0] pr-6">
          <ModelTabIcon />
          <button type="button" className="ml-[2px]">KJSJ</button>
        </div>
        <div className="flex flex-1 items-start justify-end gap-2 border-b border-[#a0a0a0] pt-1 pr-[6px]">
          <button type="button" aria-label="Minimize"><MinGlyph /></button>
          <button type="button" aria-label="Maximize"><MaxGlyph /></button>
        </div>
      </div>
      <div className="flex min-h-0 flex-1 border-2 border-[#bfcddb] bg-[#f0f0f0]">
        <div className="flex min-w-0 flex-1 flex-col">
          <div className="flex min-h-0 flex-1">
            <Diagram />
            <div className="flex w-[17px] shrink-0 flex-col items-center border-l border-white">
              <div className="flex h-[17px] items-center"><Chevron dir="up" /></div>
              <div className="mt-[160px] h-[17px] w-full bg-[#cdcdcd]" />
              <div className="mt-auto flex h-[17px] items-center"><Chevron dir="down" /></div>
            </div>
          </div>
          <div className="mr-[17px] flex h-[18px] shrink-0 items-center border-t border-white px-1">
            <Chevron dir="left" />
            <div className="flex h-full flex-1 justify-start">
              <div className="ml-[58%] h-[15px] w-[18px] self-center bg-[#cdcdcd]" />
            </div>
            <Chevron dir="right" />
          </div>
        </div>
        <Palette />
      </div>
    </section>
  );
}

/* ---------- properties ---------- */

const properties = [
  ["documentation", "Common/Templates/..."],
  ["html.style", "text-align:center;"],
  ["html.styleClass", "pane"],
  ["html.tag", "div"],
];

function PropertiesView() {
  return (
    <section className="flex h-44 shrink-0 flex-col rounded-t-md border border-[#a0a0a0]">
      <div className="flex h-[23px] shrink-0">
        <div className="flex items-center rounded-tl-md bg-linear-to-b from-white to-[#f0f0f0] pl-1">
          <TableViewIcon />
          <button type="button" className="ml-[2px]">Properties</button>
          <CloseTab />
        </div>
        <TabSlope from="#fefefe" to="#f0f0f0" />
        <div className="flex items-center rounded-tr-md border-r border-b border-[#a0a0a0] pr-px">
          <ValidationIcon />
          <button type="button" className="ml-[2px]">Validation</button>
        </div>
        <div className="flex flex-1 items-start justify-end gap-[7px] border-b border-[#a0a0a0] pt-[3px] pr-[6px]">
          <button type="button" aria-label="Refresh"><RefreshIcon /></button>
          <button type="button" aria-label="Add property"><AddRowIcon /></button>
          <button type="button" aria-label="Remove property"><RemoveRowIcon /></button>
          <button type="button" aria-label="Pin view"><PinIcon /></button>
          <button type="button" aria-label="View menu" className="ml-px"><MenuGlyph /></button>
          <button type="button" aria-label="Minimize" className="ml-[2px]"><MinGlyph /></button>
          <button type="button" aria-label="Maximize" className="ml-px"><MaxGlyph /></button>
        </div>
      </div>
      <div className="flex h-[35px] shrink-0 items-end pl-3">
        <label htmlFor="property-name" className="pb-[2px]">Property name:</label>
        <input id="property-name" type="text" className="ml-1 h-[23px] w-[73px] border border-[#7a7a7a] bg-white px-1 outline-none" />
        <label className="ml-[5px] flex items-center gap-[3px] pb-[2px]">
          <input type="checkbox" className="size-[13px] appearance-none border border-[#333] bg-white" />
          Show All
        </label>
      </div>
      <div className="mx-[7px] mt-[5px] mb-[7px] flex min-h-0 flex-1 overflow-hidden border border-[#828790] bg-white">
        <div className="min-w-0 flex-1 overflow-hidden">
          <table className="w-full table-fixed border-collapse text-left">
            <colgroup>
              <col className="w-[150px]" />
              <col className="w-[150px]" />
              <col className="w-[150px]" />
              <col />
            </colgroup>
            <thead>
              <tr className="h-6">
                <th className="border-r border-[#e5e5e5] pl-[7px] font-normal">Name</th>
                <th className="border-r border-[#e5e5e5] pl-[6px] font-normal">Shared</th>
                <th className="border-r border-[#e5e5e5] pl-[6px] font-normal">Local</th>
                <th aria-label="Spacer" />
              </tr>
            </thead>
            <tbody>
              {properties.map(([name, value]) => (
                <tr key={name} className="h-[21px] border-b border-[#f0f0f0]">
                  <td className="border-r border-r-[#e8f0f8] pl-[7px]">{name}</td>
                  <td className="border-r border-r-[#e8f0f8] pl-[6px] whitespace-nowrap">{value}</td>
                  <td className="border-r border-r-[#e8f0f8]" />
                  <td />
                </tr>
              ))}
            </tbody>
          </table>
        </div>
        <div className="m-px flex w-4 shrink-0 flex-col items-center bg-[#f0f0f0]">
          <div className="flex h-[17px] items-center"><Chevron dir="up" /></div>
          <div className="h-[17px] w-full bg-[#cdcdcd]" />
          <div className="mt-auto flex h-[17px] items-center"><Chevron dir="down" /></div>
        </div>
      </div>
    </section>
  );
}

/* ---------- page ---------- */

const menus = ["File", "Edit", "Navigate", "Search", "Project", "Run", "Window", "Help"];

export default function App() {
  return (
    <div className="flex h-screen flex-col overflow-hidden bg-[#f0f0f0] text-[13px] leading-5 text-black [font-family:'Noto_Sans','Noto_Sans_CJK_SC',sans-serif]">
      <header className="flex h-[25px] shrink-0 items-center bg-white pr-[14px] pl-[5px] text-[#999]">
        <AppIcon />
        <span className="ml-[5px]">Tersus Modeling - glsp/glsp - Tersus Studio</span>
        <div className="ml-auto flex items-center gap-[35px]">
          <button type="button" aria-label="Minimize window">
            <Icon w={10} h={11}><Box x={0} y={5} w={10} h={1} f="#888" /></Icon>
          </button>
          <button type="button" aria-label="Maximize window">
            <Icon w={10} h={11}><Box x={0} y={0} w={10} h={10} s="#888" /></Icon>
          </button>
          <button type="button" aria-label="Close window">
            <Icon w={11} h={11} smooth><path d="M0.500 0.500l10 10M10.500 0.500l-10 10" stroke="#888" /></Icon>
          </button>
        </div>
      </header>
      <nav className="flex h-[21px] shrink-0 items-start gap-3 bg-white pl-1 text-[#606060]">
        {menus.map((m) => (
          <button key={m} type="button" className="leading-6">{m}</button>
        ))}
      </nav>

      <div className="flex h-9 shrink-0 pl-[3px]">
        <div className="flex items-center gap-[7px] pb-px pt-[3px]">
          <Handle />
          <ToolButton label="New"><NewIcon /></ToolButton>
          <DropArrow label="New menu" />
          <ToolButton label="Save"><SaveIcon /></ToolButton>
          <ToolButton label="Save all"><SaveAllIcon /></ToolButton>
          <ToolButton label="Print"><PrintIcon /></ToolButton>
          <Handle />
          <ToolButton label="External tools"><RunIcon /></ToolButton>
          <DropArrow label="External tools menu" />
          <Handle />
          <ToolButton label="Search"><RocketIcon /></ToolButton>
          <DropArrow label="Search menu" />
          <Handle />
          <ToolButton label="Next annotation"><AnnotationDown /></ToolButton>
          <DropArrow label="Next annotation menu" gray />
          <ToolButton label="Previous annotation"><AnnotationUp /></ToolButton>
          <DropArrow label="Previous annotation menu" gray />
          <ToolButton label="Last edit location"><LastEditIcon /></ToolButton>
          <ToolButton label="Back"><BackIcon /></ToolButton>
          <DropArrow label="Back menu" />
          <ToolButton label="Forward"><ForwardIcon /></ToolButton>
          <DropArrow label="Forward menu" gray />
          <Handle />
          <ToolButton label="Undo"><UndoIcon /></ToolButton>
          <ToolButton label="Redo"><RedoIcon /></ToolButton>
          <Separator />
          <ToolButton label="Zoom in"><ZoomIcon plus /></ToolButton>
          <ToolButton label="Zoom out"><ZoomIcon /></ToolButton>
          <Separator />
          <ToolButton label="Start"><PlayIcon /></ToolButton>
          <ToolButton label="Stop"><StopIcon /></ToolButton>
          <button type="button" className="flex items-center gap-[6px] whitespace-nowrap">
            <ServerIcon />
            Quick Hosting
          </button>
          <ToolButton label="Deploy"><DeviceIcon /></ToolButton>
        </div>
        <div className="mb-[2px] flex-1 border-b border-[#fafafa]" />
        <svg width="44" height="36" viewBox="0 0 44 36" fill="none" className="block shrink-0" aria-hidden="true">
          <path d="M0 33.500c22 0 18-29 44-29" stroke="#fff" />
        </svg>
        <div className="mt-1 flex items-start border-t border-white pt-[3px] pr-5 pl-[3px]">
          <button type="button" aria-label="Open perspective" className="mt-[3px]"><OpenPerspectiveIcon /></button>
          <button type="button" className="ml-[3px] flex h-[22px] items-center gap-1 border border-[#92c0e8] bg-[#bfdaf3] pr-[5px] pl-[3px] whitespace-nowrap">
            <TersusIcon />
            Tersus Mod...
          </button>
        </div>
      </div>

      <main className="flex min-h-0 flex-1 gap-[3px]">
        <RepositoryView />
        <div className="flex min-w-0 flex-1 flex-col gap-[3px]">
          <EditorArea />
          <PropertiesView />
        </div>
      </main>

      <footer className="flex h-[25px] shrink-0 items-center pl-[3px]">
        <div className="h-[21px] w-[11px] border-l-[3px] border-dotted border-[#c0c0c0]" />
        <button type="button" aria-label="Show view"><FastViewIcon /></button>
        <div className="mr-[279px] ml-auto flex h-6 items-center">
          <div className="h-[21px] w-[7px] border-l-[3px] border-dotted border-[#c0c0c0]" />
          <div className="flex h-[22px] items-stretch border-t border-l border-[#a0a0a0]">
            <div className="w-[31px] border-r border-[#a0a0a0] bg-[#ffffe1]" />
            <div className="flex w-28 items-center border-r border-[#a0a0a0] pl-px">81M of 376M</div>
          </div>
          <button type="button" aria-label="Run garbage collector"><TrashIcon /></button>
          <div className="ml-[6px] h-[21px] w-1 border-l-[3px] border-dotted border-[#c0c0c0]" />
        </div>
      </footer>
    </div>
  );
}
